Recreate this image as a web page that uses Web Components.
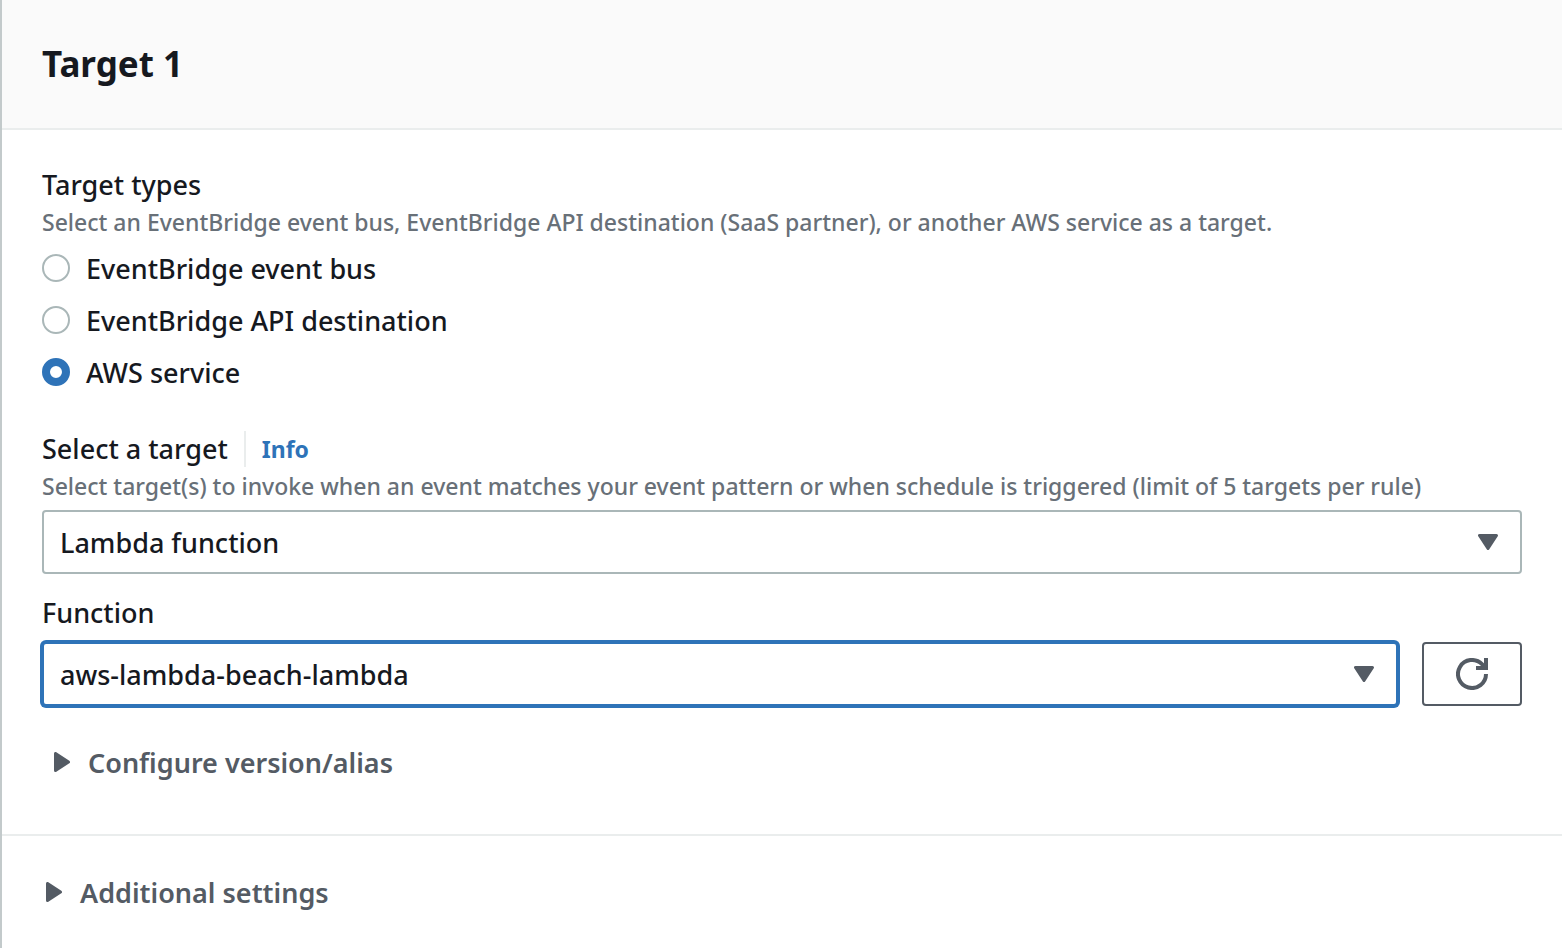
<!DOCTYPE html>
<html lang="en">
<head>
<meta charset="utf-8">
<meta name="viewport" content="width=device-width, initial-scale=1">
<title>Target 1</title>
<style>
  :root {
    --text: #16191f;
    --muted: #687078;
    --control: #545b64;
    --line: #eaeded;
    --field: #aab7b8;
    --accent: #2e73b8;
    --size-body: 27px;
    --size-hint: 23px;
    --size-title: 35px;
    --weight-text: 500;
  }
  body {
    margin: 0;
    background: #fff;
    color: var(--text);
    font-family: "Noto Sans", "Open Sans", sans-serif;
    font-size: var(--size-body);
    font-weight: var(--weight-text);
    line-height: 36px;
  }
</style>
</head>
<body>
<target-panel>
  <span slot="title">Target 1</span>
  <target-types></target-types>
  <select-field value="Lambda function" hint="Select target(s) to invoke when an event matches your event pattern or when schedule is triggered (limit of 5 targets per rule)" info>Select a target</select-field>
  <select-field value="aws-lambda-beach-lambda" refresh active>Function</select-field>
  <expand-section inset>Configure version/alias</expand-section>
  <expand-section slot="footer">Additional settings</expand-section>
</target-panel>

<script>
const define = (name, markup, setup) => {
  const template = document.createElement('template');
  template.innerHTML = markup;
  customElements.define(name, class extends HTMLElement {
    constructor() {
      super();
      this.attachShadow({ mode: 'open' }).append(template.content.cloneNode(true));
    }
    connectedCallback() {
      if (setup) setup(this, this.shadowRoot);
    }
  });
};

define('target-panel', `
  <style>
    :host { display: block; box-sizing: border-box; min-height: 100vh; border-left: 2px solid #c3cacb; }
    header { padding: 42px 40px; background: #fafafa; border-bottom: 2px solid var(--line); }
    h2 { margin: 0; font-size: var(--size-title); line-height: 44px; font-weight: 700; }
    .body { padding: 37px 40px 54px; }
    footer { padding: 38px 40px; border-top: 2px solid var(--line); }
  </style>
  <header><h2><slot name="title"></slot></h2></header>
  <div class="body"><slot></slot></div>
  <footer><slot name="footer"></slot></footer>`);

define('target-types', `
  <style>
    :host { display: block; margin-bottom: 33px; }
    fieldset { margin: 0; padding: 0; border: 0; min-width: 0; }
    legend { padding: 0; }
    p { margin: 1px 0 2px; color: var(--muted); font-size: var(--size-hint); }
    label { display: flex; align-items: center; gap: 16px; height: 52px; }
    label span { padding-top: 2px; }
    input {
      appearance: none; flex: none; box-sizing: border-box; width: 28px; height: 28px; margin: 0;
      border: 2px solid var(--field); border-radius: 50%; background: #fff;
    }
    input:checked { border: 8px solid var(--accent); }
  </style>
  <fieldset>
    <legend>Target types</legend>
    <p>Select an EventBridge event bus, EventBridge API destination (SaaS partner), or another AWS service as a target.</p>
    <label><input type="radio" name="type"><span>EventBridge event bus</span></label>
    <label><input type="radio" name="type"><span>EventBridge API destination</span></label>
    <label><input type="radio" name="type" checked><span>AWS service</span></label>
  </fieldset>`);

define('select-field', `
  <style>
    :host { display: block; margin-bottom: 21px; }
    :host([active]) { margin-bottom: 38px; }
    .heading { display: flex; align-items: center; gap: 16px; }
    a {
      padding-left: 16px; border-left: 2px solid var(--line); color: var(--accent);
      font-size: var(--size-hint); font-weight: 700; text-decoration: none;
    }
    p { margin: 1px 0 0; color: var(--muted); font-size: var(--size-hint); }
    .row { display: flex; gap: 24px; margin-top: 6px; }
    :host([active]) .row { margin-top: 11px; }
    .box { display: grid; flex: 1; align-items: center; }
    select, .box svg { grid-area: 1 / 1; }
    select {
      appearance: none; box-sizing: border-box; width: 100%; height: 64px; margin: 0; padding: 2px 64px 0 16px;
      border: 2px solid var(--field); border-radius: 4px; outline: 0; background: #fff; color: inherit;
      font: inherit;
    }
    :host([active]) select { border-color: var(--accent); box-shadow: 0 0 0 2px var(--accent); }
    .box svg { justify-self: end; margin-right: 24px; pointer-events: none; }
    button {
      display: grid; place-items: center; box-sizing: border-box; width: 100px; height: 64px; padding: 0;
      border: 2px solid var(--control); border-radius: 4px; background: #fff; color: var(--control);
    }
    [hidden] { display: none; }
  </style>
  <div class="heading"><label for="choice"><slot></slot></label><a href="#info" hidden>Info</a></div>
  <p hidden></p>
  <div class="row">
    <div class="box">
      <select id="choice"></select>
      <svg width="20" height="16" viewBox="0 0 20 16" aria-hidden="true"><path d="M1.5 1.5h17L10 14.5z" fill="#545b64" stroke="#545b64" stroke-width="3" stroke-linejoin="round"/></svg>
    </div>
    <button type="button" aria-label="Refresh" hidden>
      <svg width="32" height="32" viewBox="0 0 32 32" fill="none" stroke="currentColor" stroke-width="4" aria-hidden="true"><path d="M30 16A14 14 0 1 1 26 6.2L29 9.5"/><path d="M30 0v10H20"/></svg>
    </button>
  </div>`, (host, root) => {
  root.querySelector('select').replaceChildren(new Option(host.getAttribute('value')));
  root.querySelector('a').hidden = !host.hasAttribute('info');
  root.querySelector('button').hidden = !host.hasAttribute('refresh');
  const hint = root.querySelector('p');
  hint.textContent = host.getAttribute('hint') || '';
  hint.hidden = !hint.textContent;
});

define('expand-section', `
  <style>
    :host { display: block; padding-left: 4px; color: var(--control); font-weight: 600; }
    :host([inset]) { padding-left: 12px; }
    summary { display: flex; align-items: center; gap: 18px; height: 36px; list-style: none; cursor: pointer; }
    span { padding-top: 2px; }
    svg { flex: none; }
    details[open] svg { transform: rotate(90deg); }
  </style>
  <details><summary>
    <svg width="16" height="20" viewBox="0 0 16 20" aria-hidden="true"><path d="M1.5 1.5v17L14.5 10z" fill="currentColor" stroke="currentColor" stroke-width="3" stroke-linejoin="round"/></svg>
    <span><slot></slot></span>
  </summary></details>`);
</script>
</body>
</html>
